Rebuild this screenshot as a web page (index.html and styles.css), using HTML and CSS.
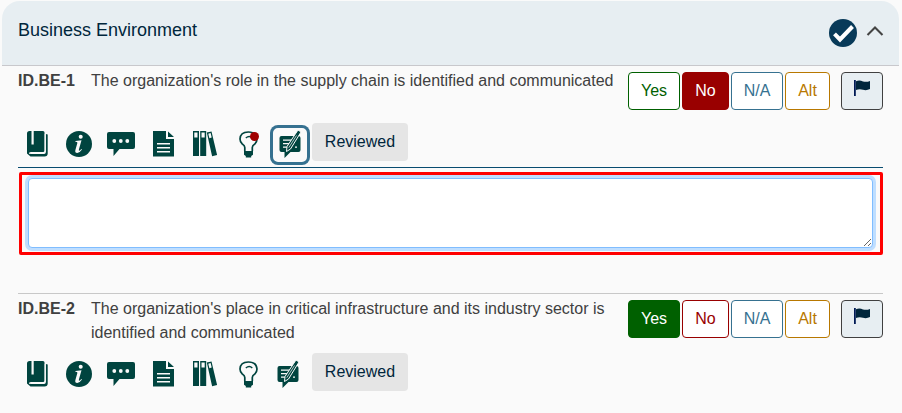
FILE: index.html
```html
<!DOCTYPE html>
<html lang="en">
<head>
<meta charset="utf-8">
<title>Business Environment</title>
<link rel="stylesheet" href="styles.css">
</head>
<body>
<svg class="symbols" aria-hidden="true">
  <symbol id="book" viewBox="0 0 40 40">
    <path d="M11.500 6H13.500v13.500h2.200V6H25q1.500 0 1.500 1.500V25.500q0 1.500-1.500 1.500H13L9 28V8.500Q9 6 11.500 6z"/>
    <path d="M9 25v3.500l3.500 3H26.500q3.200 0 3.200-3V9.500l-1.800-.5v17.500q0 2.500-2 2.500H13l-3-3z"/>
    <path d="M11 28.300h14.500q1.700 0 1.700-2V9" fill="none" stroke="#fafafa" stroke-width="1"/>
  </symbol>
  <symbol id="info" viewBox="0 0 40 40">
    <circle cx="19" cy="19" r="13"/>
    <circle cx="20.700" cy="11.700" r="2" fill="#fafafa"/>
    <path d="M15.500 16l6-.7-2.600 9.200q-.3 1.300.4 1.300.8 0 2-1.700l.7.500q-2.200 3.300-4.700 3.300-2.700 0-1.900-3l1.900-6.700q.3-1.100-.4-1.300l-1.600-.1z" fill="#fafafa"/>
  </symbol>
  <symbol id="comment" viewBox="0 0 40 40">
    <path d="M7 7H31q2 0 2 2V22q0 2-2 2H17.500L11.500 31V24H7q-2 0-2-2V9q0-2 2-2z"/>
    <g fill="#fafafa"><circle cx="12.300" cy="16" r="1.900"/><circle cx="18.800" cy="16" r="1.900"/><circle cx="25.300" cy="16" r="1.900"/></g>
  </symbol>
  <symbol id="document" viewBox="0 0 40 40">
    <path d="M9 6H22V14H30V31.500H9zM24 6.500L30 12H24z"/>
    <path d="M13 18.700H26M13 22.700H26M13 26.700H26" stroke="#fafafa" stroke-width="1.500"/>
  </symbol>
  <symbol id="binders" viewBox="0 0 40 40">
    <g transform="translate(-2 0)">
      <path d="M9 6h6v25H9zM16.200 6h6v25h-6zM22.800 7.600l4.700-1.200 5.600 23.600-5 1.300z"/>
      <path d="M10.300 7.500h3.200v5h-3.200zM17.500 7.500h3.200v5h-3.200zM24.300 8.700l2.300-.6 1.100 4.500-2.300.6z" fill="#fafafa"/>
    </g>
  </symbol>
  <symbol id="bulb" viewBox="0 0 40 40">
    <g transform="translate(.8 0)">
      <path d="M16 26V22.500Q16 20.500 13.500 19 11.200 17.200 11.200 14 11.500 7 19.500 7T28.200 14Q28.200 17.200 26 19 23.500 20.500 23.500 22.500V26" fill="none" stroke="#00443f" stroke-width="1.700"/>
      <path d="M15.200 26h9v3.800l-1.800 1.200v1.500h-5.400V31l-1.800-1.200z"/>
      <path d="M17 13q3.500-3 6.500 0" fill="none" stroke="#00443f" stroke-width="1.400"/>
    </g>
  </symbol>
  <symbol id="note" viewBox="0 0 40 40">
    <path d="M11.500 11H28.500q2 0 2 2V25q0 2-2 2H20.500L14.500 33V27H11.500q-2 0-2-2V13q0-2 2-2z"/>
    <path d="M13 15.200H24M13 18.700H22M13 22.200H20M25 22.200h2" stroke="#fafafa" stroke-width="1.300"/>
    <path d="M28 5L31 7 20.500 24 16.500 26.500 17 21.500z" stroke="#fafafa" stroke-width="1"/>
    <path d="M18.800 22.700L26.500 10.500" stroke="#fafafa" stroke-width=".7"/>
  </symbol>
  <symbol id="flag" viewBox="0 0 18 18">
    <path d="M1 1h1.800v16H1z" fill="#001a55"/>
    <path d="M3 2.200q3.500-1.300 7 .2 3.500 1 7-.5v8.200q-3.500 1.700-7 .7-3.500-1.300-7 .2z"/>
  </symbol>
</svg>
<section class="card">
  <header class="card-header">
    <h2>Business Environment</h2>
    <svg class="done" viewBox="0 0 28 28"><circle cx="14" cy="14" r="14" fill="#083a59"/><path d="M5.500 14.800l5.500 5.700L23.500 7.500" fill="none" stroke="#fff" stroke-width="4"/></svg>
    <svg class="chevron" viewBox="0 0 18 12"><path d="M1.500 10L9 2.500 16.500 10" fill="none" stroke="#444" stroke-width="2.100"/></svg>
  </header>
  <article class="question">
    <div class="prompt">
      <b class="code">ID.BE-1</b>
      <p class="text">The organization's role in the supply chain is identified and communicated</p>
      <div class="answers">
        <button class="yes">Yes</button><button class="no selected">No</button><button class="na">N/A</button><button class="alt">Alt</button>
        <button class="flag"><svg><use href="#flag"/></svg></button>
      </div>
    </div>
    <div class="tools">
      <span class="tool"><svg><use href="#book"/></svg></span>
      <span class="tool"><svg><use href="#info"/></svg></span>
      <span class="tool"><svg><use href="#comment"/></svg></span>
      <span class="tool"><svg><use href="#document"/></svg></span>
      <span class="tool"><svg><use href="#binders"/></svg></span>
      <span class="tool marked"><svg><use href="#bulb"/></svg></span>
      <span class="tool note active"><svg><use href="#note"/></svg></span>
      <button class="reviewed">Reviewed</button>
    </div>
    <div class="feedback">
      <div class="highlight"><textarea></textarea></div>
    </div>
  </article>
  <article class="question">
    <div class="prompt">
      <b class="code">ID.BE-2</b>
      <p class="text">The organization's place in critical infrastructure and its industry sector is identified and communicated</p>
      <div class="answers">
        <button class="yes selected">Yes</button><button class="no">No</button><button class="na">N/A</button><button class="alt">Alt</button>
        <button class="flag"><svg><use href="#flag"/></svg></button>
      </div>
    </div>
    <div class="tools">
      <span class="tool"><svg><use href="#book"/></svg></span>
      <span class="tool"><svg><use href="#info"/></svg></span>
      <span class="tool"><svg><use href="#comment"/></svg></span>
      <span class="tool"><svg><use href="#document"/></svg></span>
      <span class="tool"><svg><use href="#binders"/></svg></span>
      <span class="tool"><svg><use href="#bulb"/></svg></span>
      <span class="tool note"><svg><use href="#note"/></svg></span>
      <button class="reviewed">Reviewed</button>
    </div>
  </article>
</section>
</body>
</html>
```
FILE: styles.css
```css
* { box-sizing: border-box; }
body {
  margin: 0;
  background: #fafafa;
  color: #404040;
  font: 16px/24px "Liberation Sans", Arial, sans-serif;
  overflow: hidden;
}
.symbols { display: none; }
.card { width: 897px; margin: 1px 0 0 2px; }
.card-header {
  display: flex;
  align-items: center;
  height: 65px;
  padding: 0 15px 0 16px;
  background: #e7eef2;
  border-bottom: 1px solid #c8c8cc;
  border-radius: 18px 18px 0 0;
}
.card-header h2 {
  flex: 1;
  margin: 0 0 6px;
  color: #00263c;
  font-size: 18px;
  font-weight: 400;
}
.done { width: 28px; height: 28px; margin-right: 9px; }
.chevron { width: 18px; height: 12px; margin-bottom: 4px; }
.question { margin: 0 16px; }
.question + .question { border-top: 1px solid #c8c8c8; }
.prompt { display: flex; height: 57px; padding-top: 2px; }
.question + .question .prompt { height: 59px; }
.code { width: 73px; flex: none; }
.text { width: 537px; margin: 0; flex: none; }
.code, .text { margin-top: 1px; }
.answers { display: flex; gap: 2px; padding-top: 4px; }
button { font: inherit; border-radius: 4px; padding: 0; height: 38px; }
.answers button { border: 1px solid; background: #fff; }
.answers .yes { width: 52px; color: #006000; }
.answers .no { width: 47px; color: #990000; }
.answers .na { width: 52px; color: #367190; }
.answers .alt { width: 45px; color: #b87800; }
.answers .yes.selected { background: #006000; border-color: #006000; color: #fff; }
.answers .no.selected { background: #990000; border-color: #990000; color: #fff; }
.answers .flag {
  display: flex;
  justify-content: center;
  align-items: flex-start;
  width: 42px;
  margin-left: 9px;
  padding-top: 6px;
  background: #e7eef2;
  border-color: #404040;
}
.flag svg { width: 18px; height: 18px; fill: #00263c; }
.tools { display: flex; gap: 2px; height: 44px; }
.tool {
  position: relative;
  width: 40px;
  height: 40px;
  margin-top: 2px;
  border-radius: 8px;
  fill: #00443f;
}
.tool svg { display: block; width: 40px; height: 40px; }
.tool.note:not(.active) svg { margin-left: -2px; }
.tool.active { box-shadow: inset 0 0 0 3px #367190; background: #fafafa; }
.tool.marked::after {
  content: "";
  position: absolute;
  left: 22px;
  top: 7px;
  width: 9px;
  height: 9px;
  border-radius: 50%;
  background: #a00000;
}
.reviewed { width: 96px; border: 0; background: #e5e5e5; color: #00263c; }
.feedback { height: 126px; padding: 4px 0 0 1px; border-top: 1px solid #084c70; }
.highlight { width: 864px; height: 83px; padding: 3px 6px; border: 3px solid #f00; border-radius: 2px; }
textarea {
  display: block;
  width: 845px;
  height: 70px;
  border: 1px solid #80bdff;
  border-radius: 4px;
  box-shadow: 0 0 0 3px #bfdeff;
  background: #fff;
  outline: 0;
}
```
